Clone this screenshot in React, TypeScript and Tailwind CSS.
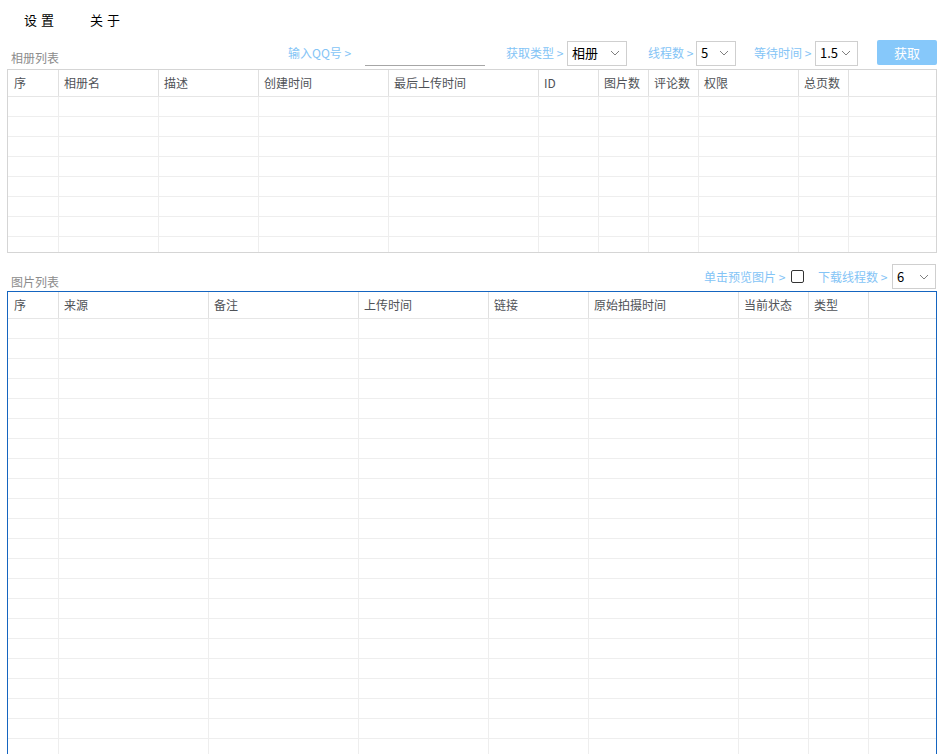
import React from "react";

const FONT = { fontFamily: '"Noto Sans CJK SC", "Noto Sans", sans-serif' };

function Chevron() {
  return (
    <svg width="10" height="6" viewBox="0 0 10 6" className="shrink-0">
      <polyline points="1,1 5,5 9,1" fill="none" stroke="#808080" strokeWidth="1" />
    </svg>
  );
}

function Select({ value, w }: { value: string; w: string }) {
  return (
    <div className={`${w} h-[25px] border border-[#cfcfcf] bg-white flex items-center justify-between pl-[4px] pr-[6px] text-[13px] text-black`}>
      <span>{value}</span>
      <Chevron />
    </div>
  );
}

function Table({
  cols,
  headers,
  rows,
  borderClass,
  heightClass,
}: {
  cols: number[];
  headers: string[];
  rows: number;
  borderClass: string;
  heightClass: string;
}) {
  const widths = cols.map((w, i) => (i === 0 ? w + 1 : w));
  return (
    <div className={`mx-[7px] ${heightClass} ${borderClass} overflow-hidden bg-white`}>
      <div className="flex h-[27px] border-b border-[#e6e6e6]">
        {widths.map((w, i) => (
          <div
            key={i}
            style={{ width: w }}
            className={`shrink-0 h-full flex items-center ${i === 0 ? "pl-[6px]" : "pl-[5px]"} border-r border-[#e0e0e0] text-[12px] text-[#4f5257]`}
          >
            {headers[i]}
          </div>
        ))}
        <div className="flex-1" />
      </div>
      {Array.from({ length: rows }).map((_, r) => (
        <div key={r} className="flex h-[20px] border-b border-[#eeeeee]">
          {widths.map((w, i) => (
            <div key={i} style={{ width: w }} className="shrink-0 h-full border-r border-[#eeeeee]" />
          ))}
          <div className="flex-1" />
        </div>
      ))}
    </div>
  );
}

export default function App() {
  const topCols = [50, 100, 100, 130, 150, 60, 50, 50, 100, 50];
  const topHeaders = ["序", "相册名", "描述", "创建时间", "最后上传时间", "ID", "图片数", "评论数", "权限", "总页数"];
  const botCols = [50, 150, 150, 130, 100, 150, 70, 60];
  const botHeaders = ["序", "来源", "备注", "上传时间", "链接", "原始拍摄时间", "当前状态", "类型"];

  return (
    <div style={FONT} className="w-[944px] h-[754px] bg-white overflow-hidden flex flex-col">
      {/* Menu bar */}
      <div className="h-[40px] shrink-0 flex items-center text-[13px] text-black">
        <span className="ml-[24px] tracking-[4px]">设置</span>
        <span className="ml-[32px] tracking-[4px]">关于</span>
      </div>

      {/* Row 1 */}
      <div className="h-[29px] shrink-0 flex items-start">
        <span className="self-end mb-[3px] ml-[11px] text-[12px] leading-[16px] text-[#8c8c8c]">相册列表</span>
        <div className="ml-auto mr-[7px] flex items-center h-[26px] text-[12px] text-[#84c4f6] whitespace-nowrap">
          <span className="w-[77px]">输入QQ号 &gt;</span>
          <div className="w-[120px] h-[25px] border-b border-[#a6a6a6]" />
          <span className="ml-[21px] w-[61px]">获取类型 &gt;</span>
          <Select value="相册" w="w-[60px]" />
          <span className="ml-[21px] w-[48px]">线程数 &gt;</span>
          <Select value="5" w="w-[40px]" />
          <span className="ml-[18px] w-[61px]">等待时间 &gt;</span>
          <Select value="1.5" w="w-[43px]" />
          <button className="ml-[19px] w-[60px] h-[25px] rounded-[2px] bg-[#86c8fa] text-white text-[13px] self-start">
            获取
          </button>
        </div>
      </div>

      <Table
        cols={topCols}
        headers={topHeaders}
        rows={8}
        borderClass="border border-[#d5d5d5]"
        heightClass="h-[184px] shrink-0"
      />

      {/* Row 2 */}
      <div className="h-[38px] shrink-0 flex items-end">
        <span className="mb-[1px] ml-[11px] text-[12px] leading-[16px] text-[#8c8c8c]">图片列表</span>
        <div className="ml-auto mr-[8px] mb-[2px] flex items-center h-[25px] text-[12px] text-[#84c4f6] whitespace-nowrap">
          <span className="w-[87px]">单击预览图片 &gt;</span>
          <div className="w-[13px] h-[13px] border border-[#333] rounded-[2px] bg-white" />
          <span className="ml-[14px] w-[74px]">下载线程数 &gt;</span>
          <Select value="6" w="w-[44px]" />
        </div>
      </div>

      <Table
        cols={botCols}
        headers={botHeaders}
        rows={22}
        borderClass="border border-[#1565c0] border-b-0"
        heightClass="h-[463px] shrink-0"
      />
    </div>
  );
}
